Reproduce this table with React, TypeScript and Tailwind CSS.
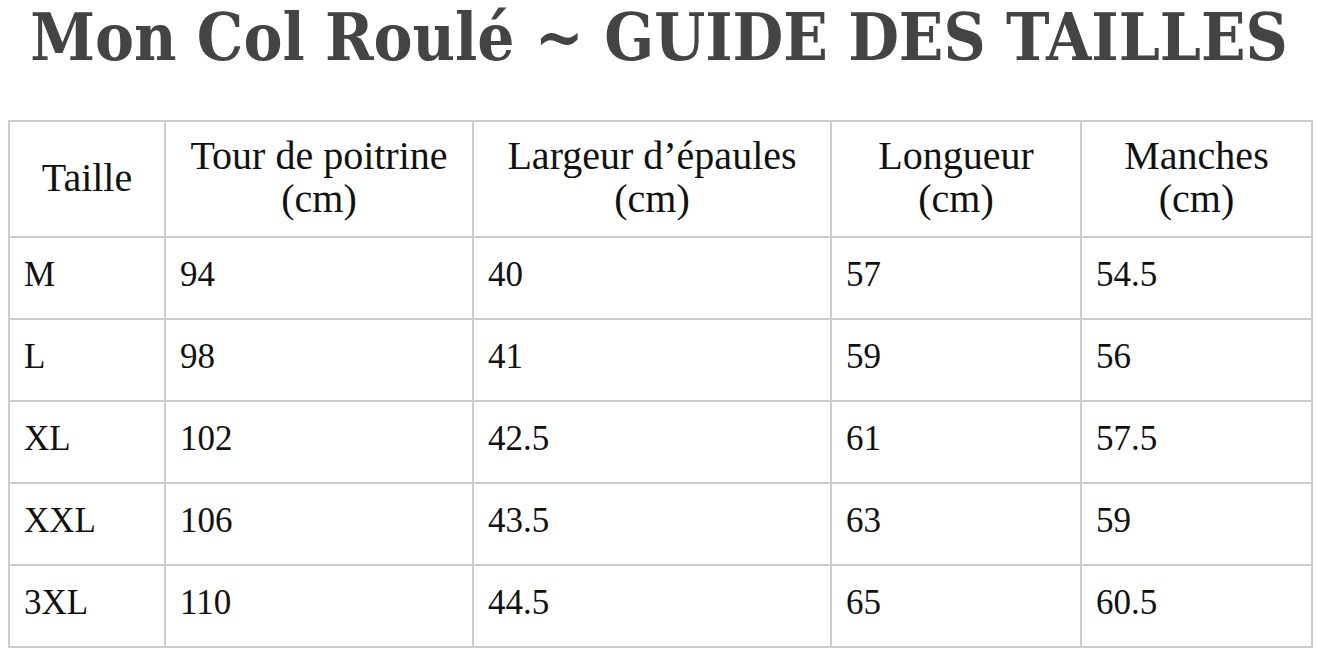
const headers = [
  ['Taille'],
  ['Tour de poitrine', '(cm)'],
  ['Largeur d’épaules', '(cm)'],
  ['Longueur', '(cm)'],
  ['Manches', '(cm)'],
];

const rows = [
  ['M', '94', '40', '57', '54.5'],
  ['L', '98', '41', '59', '56'],
  ['XL', '102', '42.5', '61', '57.5'],
  ['XXL', '106', '43.5', '63', '59'],
  ['3XL', '110', '44.5', '65', '60.5'],
];

const colWidths = ['w-[156px]', 'w-[308px]', 'w-[358px]', 'w-[250px]', 'w-[231px]'];

export default function App() {
  return (
    <div className="min-h-screen bg-white px-[8px] pb-[8px] font-[Liberation_Serif,serif]">
      <h1 className="whitespace-nowrap text-center font-[DejaVu_Serif_Condensed,DejaVu_Serif,serif] text-[65px] font-bold leading-[74px] text-[#444444]">
        Mon Col Roulé ~ GUIDE DES TAILLES
      </h1>

      <table className="mt-[46px] w-[1303px] table-fixed border-collapse font-[Liberation_Serif,serif] text-[#111111]">
        <colgroup>
          {colWidths.map((w, i) => (
            <col key={i} className={w} />
          ))}
        </colgroup>
        <thead>
          <tr className="h-[116px]">
            {headers.map((lines, i) => (
              <th
                key={i}
                className="border-2 border-[#cccccc] px-2 pb-[4px] text-center align-middle text-[40px] font-normal leading-[43px]"
              >
                {lines.map((l, j) => (
                  <div key={j}>{l}</div>
                ))}
              </th>
            ))}
          </tr>
        </thead>
        <tbody>
          {rows.map((r, i) => (
            <tr key={i} className="h-[82px]">
              {r.map((c, j) => (
                <td
                  key={j}
                  className="border-2 border-[#cccccc] pl-[14px] pb-[6px] align-middle text-[35px] leading-[40px]"
                >
                  {c}
                </td>
              ))}
            </tr>
          ))}
        </tbody>
      </table>
    </div>
  );
}
